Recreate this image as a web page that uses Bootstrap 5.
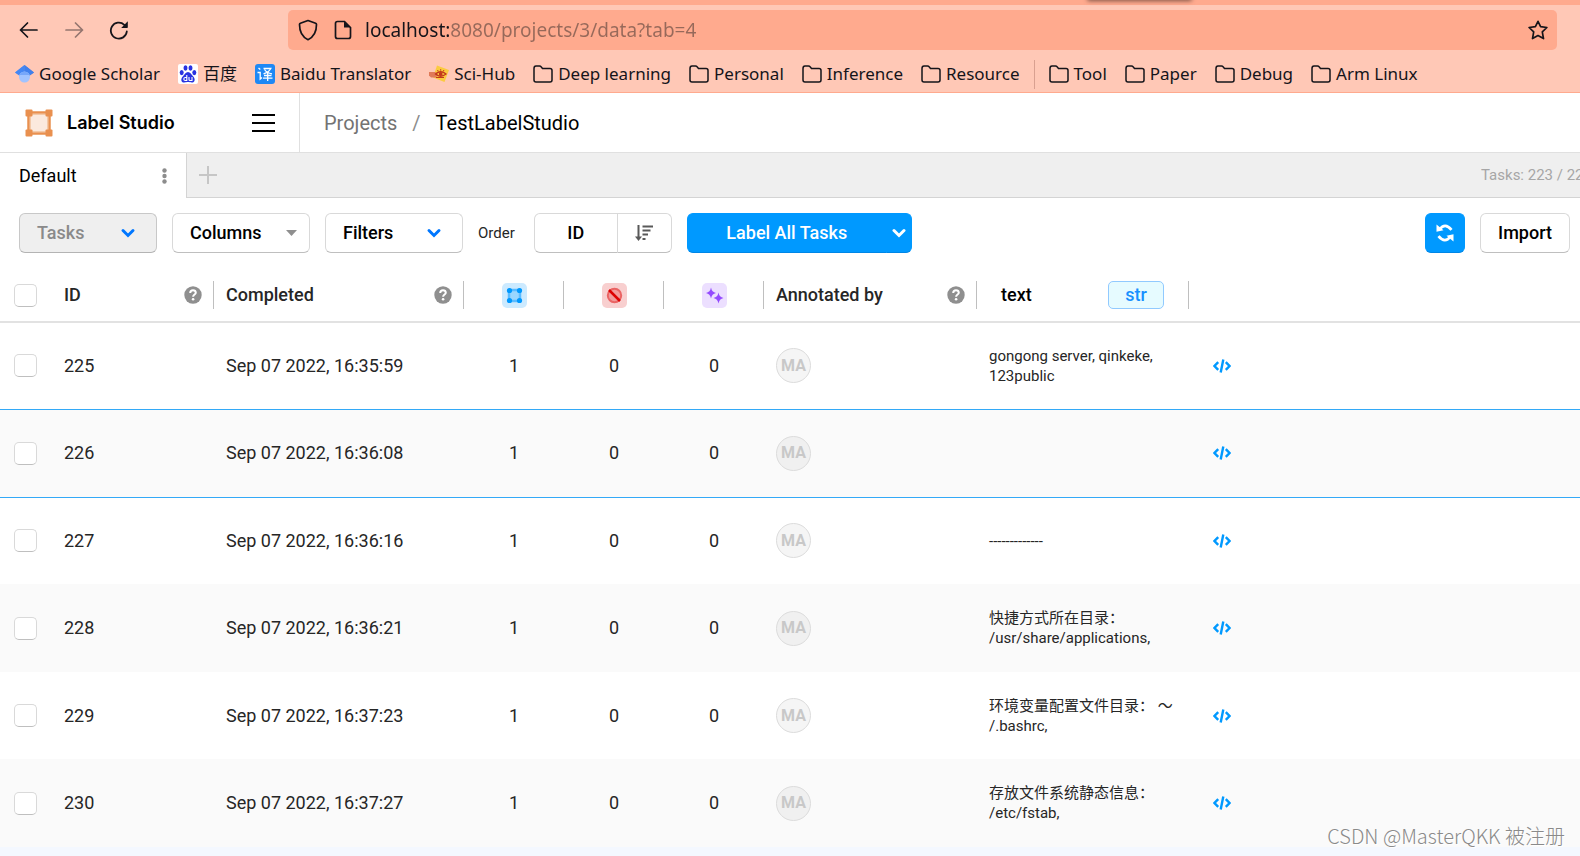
<!DOCTYPE html>
<html lang="en">
<head>
<meta charset="utf-8">
<meta name="viewport" content="width=device-width, initial-scale=1">
<title>Label Studio</title>
<link href="https://cdn.jsdelivr.net/npm/bootstrap@5.3.0/dist/css/bootstrap.min.css" rel="stylesheet">
<style>
  body { font-family: Roboto, "Noto Sans CJK SC", sans-serif; font-size: 18px; line-height: 24px; color: #262626; background: #f4f8ff; }
  svg { flex: none; }

  /* browser chrome */
  .chrome { background: #ffc8b6; border-top: 5px solid #ffaa8e; border-bottom: 1px solid #ffaa8e; font-family: "Noto Sans", "Noto Sans CJK SC", sans-serif; color: #15141a; }
  .tab-edge { top: -10px; right: 388px; width: 105px; height: 5px; border-radius: 4px; box-shadow: 0 1px 4px #00000080; }
  .navrow { padding: 5px 23px 5px 19px; }
  .navrow button { color: #15141a; width: 20px; height: 20px; }
  .navrow button:disabled { color: #15141a; opacity: .45; border: 0; }
  .navbtns { gap: 25px; width: 269px; }
  .urlbar { height: 40px; background: #ffaa8e; border-radius: 5px; padding: 0 9px 0 10px; }
  .urlbar input { border: 0; outline: 0; padding: 0; margin-left: 13px; font-size: 19px; color: transparent; -webkit-background-clip: text; background-clip: text; background-image: linear-gradient(90deg, #15141a 85px, #97695a 85px); }
  .marks { height: 37px; padding: 1px 15px 0; gap: 18px; font-size: 17px; white-space: nowrap; }
  .marks a { color: #15141a; text-decoration: none; gap: 5px; }
  .marks .rule { width: 1px; height: 29px; background: #d9a090; margin: 0 -4px; }

  /* app header */
  .apphead { height: 60px; background: #fff; border-bottom: 1px solid #e0e0e0; }
  .brand { width: 300px; padding: 0 24px 0 25px; border-right: 1px solid #e0e0e0; }
  .brand a { color: #000; text-decoration: none; font-family: Inter, sans-serif; font-weight: 600; gap: 14px; }
  .crumbs { font-size: 20px; padding-left: 24px; --bs-breadcrumb-item-padding-x: 15px; --bs-breadcrumb-divider-color: #8c8c8c; }
  .crumbs a { color: #737373; text-decoration: none; }
  .crumbs .active { color: #000; }

  /* view tabs */
  .views { height: 45px; background: #efefef; border-bottom: 1px solid #d4d4d4; }
  .views .current { width: 187px; background: #fff; border-right: 1px solid #d4d4d4; margin-bottom: -1px; padding: 0 19px; color: #000; }
  .taskcount { width: 99px; font-size: 15px; color: #a6a6a6; white-space: nowrap; overflow: hidden; }

  /* toolbar */
  .tools { background: #fff; padding: 15px 10px 15px 19px; gap: 15px; }
  .tools .btn { height: 40px; font-size: 18px; font-weight: 500; line-height: 24px; padding: 0 17px; border-radius: 6px; border: 1px solid #d9d9d9; border-bottom-color: #bfbfbf; color: #000; background: #fff; }
  .tools .pick { width: 138px; }
  .tools .btn:disabled { background: #efefef; color: #8a8a8a; border-color: #c8c8c8; border-bottom-color: #b4b4b4; opacity: 1; }
  .tools .solid { background: #0099ff; color: #fff; border-color: #0099ff; border-bottom-color: #0086e6; }
  .tools .btn-group .btn:first-child { border-top-right-radius: 0; border-bottom-right-radius: 0; }
  .tools .btn-group .btn:last-child { border-top-left-radius: 0; border-bottom-left-radius: 0; }
  .order { font-size: 15px; }

  /* task table */
  .tasks { table-layout: fixed; background: #fff; width: 100%; }
  .tasks th { height: 54px; padding: 0; font-weight: 500; border-bottom: 2px solid #e2e2e2; vertical-align: top; }
  .tasks th > div { height: 28px; margin-top: 13px; padding: 0 11px 0 12px; border-right: 1px solid #bfbfbf; }
  .tasks th.bare > div { border: 0; }
  .tasks td { height: 87px; padding: 0 12px; }
  .tasks tbody tr:nth-child(even) td { height: 88px; background: #fafafa; }
  .tasks tbody tr.hovered td { border-top: 1px solid #33a9f7; border-bottom: 1px solid #33a9f7; }
  .tasks .form-check-input { width: 23px; height: 23px; margin: 0; border: 1px solid #d9d9d9; border-bottom-color: #bfbfbf; border-radius: 5px; background-color: #fff; display: block; }
  .tasks td.pickcell, .tasks th.pickcell > div { padding: 0 14px; }
  .tasks td.value { font-size: 15px; line-height: 20px; padding: 0 16px 0 12px; }
  .kind { width: 56px; height: 28px; border: 1px solid #91caff; border-radius: 5px; background: #e6fbff; color: #1890ff; }
  .avatar { width: 35px; height: 35px; border-radius: 50%; border: 1px solid #dcdcdc; background: #f5f5f5; color: #c8c8c8; font-size: 16px; font-weight: 700; }
  .hovered .avatar, tr:nth-child(even) .avatar { background: #f0f0f0; }
  .watermark { right: 15px; bottom: 8px; font-family: "Noto Sans CJK SC", sans-serif; font-size: 20px; font-weight: 300; color: #8a8a8a; text-shadow: 1px 1px 0 #fff; }
</style>
</head>
<body class="d-flex flex-column min-vh-100 position-relative">

<svg width="0" height="0" class="position-absolute" aria-hidden="true">
  <symbol id="folder" viewBox="0 0 20 18"><path d="M1 3.500Q1 1 3 1h3.500q1 0 1.600.8L9.500 3.500H17q2 0 2 2V15q0 2-2 2H3q-2 0-2-2z" fill="none" stroke="currentColor" stroke-width="1.500"/></symbol>
  <symbol id="help" viewBox="0 0 18 18"><circle cx="9" cy="9" r="8.700" fill="#8f8f8f"/><path d="M6.200 7q.1-2.700 2.800-2.700T11.800 6.800c0 1.800-2.700 1.700-2.700 3.900" fill="none" stroke="#fff" stroke-width="2"/><circle cx="9.100" cy="13.300" r="1.300" fill="#fff"/></symbol>
  <symbol id="code" viewBox="0 0 18 14"><path d="M5.200 3.200 1.500 7l3.700 3.800M12.800 3.200 16.500 7l-3.700 3.800M10.300.5 7.700 13.500" fill="none" stroke="#0099ff" stroke-width="2.400"/></symbol>
  <symbol id="chev" viewBox="0 0 14 10"><path d="m2 2.500 5 5 5-5" fill="none" stroke="currentColor" stroke-width="3" stroke-linecap="round"/></symbol>
</svg>

<header class="chrome position-relative">
  <div class="tab-edge position-absolute"></div>
  <div class="navrow d-flex align-items-center">
    <div class="navbtns d-flex flex-shrink-0">
      <button class="btn p-0 border-0 d-flex" aria-label="Back"><svg width="20" height="20" viewBox="0 0 20 20" fill="none" stroke="currentColor" stroke-width="1.700" stroke-linecap="round" stroke-linejoin="round"><path d="M18 10H1.500M8.500 3 1.500 10l7 7"/></svg></button>
      <button class="btn p-0 border-0 d-flex" aria-label="Forward" disabled><svg width="20" height="20" viewBox="0 0 20 20" fill="none" stroke="currentColor" stroke-width="1.700" stroke-linecap="round" stroke-linejoin="round"><path d="M2 10h16.500M11.500 3l7 7-7 7"/></svg></button>
      <button class="btn p-0 border-0 d-flex" aria-label="Reload"><svg width="20" height="20" viewBox="0 0 20 20"><path d="M17.800 11.500A8 8 0 1 1 15.300 4.800" fill="none" stroke="currentColor" stroke-width="1.800" stroke-linecap="round"/><path d="M18.800 1.300v5.900q0 .8-.8.800h-5.800z" fill="currentColor"/></svg></button>
    </div>
    <div class="urlbar d-flex align-items-center flex-grow-1">
      <svg width="20" height="22" viewBox="0 0 20 22" fill="none" stroke="#15141a" stroke-width="1.700"><path d="M10 1.500 17.600 4.300q.9.400.9 1.300C18.500 12.500 16 18 10 20.700 4 18 1.500 12.500 1.500 5.600q0-.9.900-1.300z" stroke-linejoin="round"/></svg>
      <svg class="ms-3" width="18" height="20" viewBox="0 0 18 20"><path d="M3.500 1.500h7l6 6v9q0 2-2 2h-11q-2 0-2-2v-13q0-2 2-2z" fill="none" stroke="#15141a" stroke-width="1.700"/><path d="M10 1.500v6h6.500z" fill="#15141a"/></svg>
      <input class="flex-grow-1" type="text" aria-label="Address" value="localhost:8080/projects/3/data?tab=4">
      <button class="btn p-0 border-0 d-flex" aria-label="Bookmark this page"><svg width="20" height="20" viewBox="0 0 20 20"><path d="m10 1.300 2.600 5.300 6.300.9-4.600 4.400 1.200 6.700L10 15.600l-5.500 3 1.200-6.700L1.100 7.500l6.300-.9z" fill="none" stroke="#15141a" stroke-width="1.700" stroke-linejoin="round"/></svg></button>
    </div>
  </div>
  <nav class="marks d-flex align-items-center" aria-label="Bookmarks">
    <a href="#" class="d-flex align-items-center"><svg width="19" height="20" viewBox="0 0 19 20"><path d="M9.500 1 0 8.500l5 3.500L9.500 8z" fill="#4d90f5"/><path d="M9.500 1 19 8.500 14 12 9.500 8z" fill="#3a6fd0"/><path d="M0 8.500 9.500 1 19 8.500l-4.800 3.200H4.800z" fill="#4285f4" opacity=".8"/><circle cx="9.500" cy="13" r="5.500" fill="#a0c3ff"/><path d="M4.500 11a5.500 5.500 0 0 1 10 0z" fill="#76a7fa"/></svg>Google Scholar</a>
    <a href="#" class="d-flex align-items-center"><svg width="20" height="20" viewBox="0 0 20 20"><rect width="20" height="20" rx="2" fill="#fff"/><g fill="#2932e1"><ellipse cx="3.700" cy="8.600" rx="2" ry="2.600"/><ellipse cx="7.500" cy="4" rx="2" ry="2.700"/><ellipse cx="12.500" cy="4" rx="2" ry="2.700"/><ellipse cx="16.300" cy="8.600" rx="2" ry="2.600"/><path d="M10 8c2.200 0 3 2.300 4.800 3.900 3 2.700 2.200 6.600-1 6.600-1.500 0-2.300-.4-3.800-.4s-2.300.4-3.800.4c-3.200 0-4-3.900-1-6.600C7 10.300 7.800 8 10 8z"/></g><path d="M8.800 11v5.500H7.300a1.500 1.500 0 0 1 0-3h1.500M11 13v2.500q0 1 1 1h2V13" fill="none" stroke="#fff" stroke-width="1.100"/></svg>百度</a>
    <a href="#" class="d-flex align-items-center"><svg width="20" height="20" viewBox="0 0 20 20"><rect width="20" height="20" rx="3" fill="#1e88f5"/><path d="m3.500 4 1.800 1.600M2.500 8.500h2.700v6.500l1.800-1.500M8.500 4.500h7.300c-1.300 2.500-3.800 4.300-7.300 5.300M9.500 5.500c1.500 2.200 3.600 3.600 7.500 4.300M12.700 9v8M9 11.500h7.500M8 14.200h9.500" fill="none" stroke="#fff" stroke-width="1.300"/></svg>Baidu Translator</a>
    <a href="#" class="d-flex align-items-center"><svg width="20" height="20" viewBox="0 0 20 20"><path d="M8 1.500 20 6l-4.500 12L4 13.500z" fill="#fbcb3f"/><path d="M0 8h6l3 2-2 3.500H2L0 11.500z" fill="#e07a58"/><path d="M6.500 10q5-4.500 10.500 0-5.500 4.500-10.500 0z" fill="none" stroke="#c3371c" stroke-width="1.300"/><circle cx="11.700" cy="10" r="1.900" fill="#c3371c"/><path d="m8.500 6 .7 1.200M11.700 5.200v1.500M15 6l-.7 1.200M7 13.500h8" stroke="#c3371c"/></svg>Sci-Hub</a>
    <a href="#" class="d-flex align-items-center"><svg width="20" height="18"><use href="#folder"/></svg>Deep learning</a>
    <a href="#" class="d-flex align-items-center"><svg width="20" height="18"><use href="#folder"/></svg>Personal</a>
    <a href="#" class="d-flex align-items-center"><svg width="20" height="18"><use href="#folder"/></svg>Inference</a>
    <a href="#" class="d-flex align-items-center"><svg width="20" height="18"><use href="#folder"/></svg>Resource</a>
    <span class="rule"></span>
    <a href="#" class="d-flex align-items-center"><svg width="20" height="18"><use href="#folder"/></svg>Tool</a>
    <a href="#" class="d-flex align-items-center"><svg width="20" height="18"><use href="#folder"/></svg>Paper</a>
    <a href="#" class="d-flex align-items-center"><svg width="20" height="18"><use href="#folder"/></svg>Debug</a>
    <a href="#" class="d-flex align-items-center"><svg width="20" height="18"><use href="#folder"/></svg>Arm Linux</a>
  </nav>
</header>

<div class="apphead d-flex">
  <div class="brand d-flex align-items-center justify-content-between">
    <a href="#" class="d-flex align-items-center"><svg width="28" height="28" viewBox="0 0 28 28"><path d="M4 4h20v20H4z" fill="#fbe9dd"/><path d="M4 4h20v20H4z" fill="none" stroke="#f3c9a8" stroke-width="4"/><path d="M4 3.500h20M4 24.500h20M3.500 4v20M24.500 4v20" stroke="#e9904f" stroke-width="2"/><g fill="#e9904f"><rect x=".5" y=".5" width="7" height="7" rx="1"/><rect x="20.500" y=".5" width="7" height="7" rx="1"/><rect x=".5" y="20.500" width="7" height="7" rx="1"/><rect x="20.500" y="20.500" width="7" height="7" rx="1"/></g></svg>Label Studio</a>
    <button class="btn p-0 border-0 d-flex" aria-label="Menu"><svg width="23" height="18" viewBox="0 0 23 18"><path d="M0 1h23M0 9h23M0 17h23" stroke="#000" stroke-width="2"/></svg></button>
  </div>
  <nav class="d-flex align-items-center" aria-label="Breadcrumb">
    <ol class="breadcrumb crumbs mb-0">
      <li class="breadcrumb-item"><a href="#">Projects</a></li>
      <li class="breadcrumb-item active" aria-current="page">TestLabelStudio</li>
    </ol>
  </nav>
</div>

<div class="views d-flex">
  <div class="current d-flex align-items-center justify-content-between">Default
    <button class="btn p-0 border-0 d-flex" aria-label="Tab options"><svg width="5" height="16" viewBox="0 0 5 16" fill="#8c8c8c"><circle cx="2.500" cy="2.500" r="2.200"/><circle cx="2.500" cy="8" r="2.200"/><circle cx="2.500" cy="13.500" r="2.200"/></svg></button>
  </div>
  <button class="btn border-0 d-flex align-items-center" aria-label="Add tab"><svg width="18" height="18" viewBox="0 0 18 18"><path d="M9 0v18M0 9h18" stroke="#c6c6c6" stroke-width="2"/></svg></button>
  <div class="taskcount ms-auto align-self-center">Tasks: 223 / 22</div>
</div>

<div class="tools d-flex align-items-center">
  <button class="btn pick d-flex align-items-center" disabled>Tasks<svg class="ms-auto" width="22" height="10" style="color:#0077ff"><use href="#chev"/></svg></button>
  <button class="btn pick d-flex align-items-center pe-2">Columns<svg class="ms-auto me-1" width="11" height="6" viewBox="0 0 11 6"><path d="M0 0h11L5.500 6z" fill="#8f8f8f"/></svg></button>
  <button class="btn pick d-flex align-items-center">Filters<svg class="ms-auto" width="22" height="10" style="color:#0077ff"><use href="#chev"/></svg></button>
  <span class="order">Order</span>
  <div class="btn-group ms-1">
    <button class="btn px-0" style="width:84px">ID</button>
    <button class="btn px-0 d-flex align-items-center justify-content-center" style="width:55px" aria-label="Sort descending"><svg width="18" height="16" viewBox="0 0 18 16" fill="none" stroke="#595959" stroke-width="2"><path d="M3.500 0v13M7.500 1.500h10.500M7.500 5.500h8M7.500 9.500h5.500M7.500 14h3"/><path d="M0 11.500h7L3.500 16z" fill="#595959" stroke="none"/></svg></button>
  </div>
  <div class="btn-group">
    <button class="btn solid px-0" style="width:200px">Label All Tasks</button>
    <button class="btn solid px-0 d-flex align-items-center justify-content-center" style="width:26px" aria-label="More labeling options"><svg width="14" height="10"><use href="#chev"/></svg></button>
  </div>
  <button class="btn solid px-0 ms-auto d-flex align-items-center justify-content-center" style="width:40px" aria-label="Refresh"><svg width="18" height="20" viewBox="0 0 18 20" fill="none" stroke="#fff" stroke-width="2.800"><path d="M3.500 6.500Q9-1 15.500 6.800M14.500 13.500Q9 21 2.500 13.200"/><path d="M.5 1.500v7.300l7-1.600zM17.500 18.500v-7.300l-7 1.600z" fill="#fff" stroke="none"/></svg></button>
  <button class="btn">Import</button>
</div>

<table class="tasks">
  <colgroup><col style="width:52px"><col style="width:162px"><col style="width:250px"><col style="width:100px"><col style="width:100px"><col style="width:100px"><col style="width:213px"><col style="width:212px"><col></colgroup>
  <thead>
    <tr>
      <th class="pickcell bare"><div class="d-flex align-items-center"><input class="form-check-input" type="checkbox" aria-label="Select all tasks"></div></th>
      <th><div class="d-flex align-items-center justify-content-between">ID<svg width="18" height="18"><use href="#help"/></svg></div></th>
      <th><div class="d-flex align-items-center justify-content-between">Completed<svg width="18" height="18"><use href="#help"/></svg></div></th>
      <th aria-label="Total annotations"><div class="d-flex align-items-center justify-content-center"><svg width="25" height="25" viewBox="0 0 25 25"><rect width="25" height="25" rx="5" fill="#cceaff"/><path d="M7 7h11v11H7z" fill="#99d6ff" stroke="#5cbcff" stroke-width="2.500"/><g fill="#0099ff"><circle cx="7.500" cy="7.500" r="2.600"/><circle cx="17.500" cy="7.500" r="2.600"/><circle cx="7.500" cy="17.500" r="2.600"/><circle cx="17.500" cy="17.500" r="2.600"/></g></svg></div></th>
      <th aria-label="Cancelled annotations"><div class="d-flex align-items-center justify-content-center"><svg width="25" height="25" viewBox="0 0 25 25"><rect width="25" height="25" rx="5" fill="#f8cfcf"/><circle cx="12.500" cy="12.500" r="6.700" fill="#f19a9a" stroke="#ea6464" stroke-width="2"/><path d="m7 7 11 11" stroke="#dd0000" stroke-width="2.500"/></svg></div></th>
      <th aria-label="Total predictions"><div class="d-flex align-items-center justify-content-center"><svg width="25" height="25" viewBox="0 0 25 25"><rect width="25" height="25" rx="5" fill="#ecdfff"/><path d="M9 4.500q.8 4.700 5 5.500-4.200.8-5 5.500-.8-4.700-5-5.500 4.200-.8 5-5.500zM16.500 9.500q.8 4.700 5 5.500-4.200.8-5 5.500-.8-4.700-5-5.500 4.200-.8 5-5.500z" fill="#944bff"/></svg></div></th>
      <th><div class="d-flex align-items-center justify-content-between">Annotated by<svg width="18" height="18"><use href="#help"/></svg></div></th>
      <th class="text-black"><div class="d-flex align-items-center justify-content-between px-4">text<span class="kind d-flex align-items-center justify-content-center">str</span></div></th>
      <th class="bare" aria-label="Source"></th>
    </tr>
  </thead>
  <tbody>
    <tr><td class="pickcell"><input class="form-check-input" type="checkbox" aria-label="Select task 225"></td><td>225</td><td>Sep 07 2022, 16:35:59</td><td class="text-center">1</td><td class="text-center">0</td><td class="text-center">0</td><td><span class="avatar d-flex align-items-center justify-content-center">MA</span></td><td class="value">gongong server, qinkeke, 123public</td><td class="ps-4"><button class="btn p-0 border-0 d-flex" aria-label="Show source"><svg width="18" height="14"><use href="#code"/></svg></button></td></tr>
    <tr class="hovered"><td class="pickcell"><input class="form-check-input" type="checkbox" aria-label="Select task 226"></td><td>226</td><td>Sep 07 2022, 16:36:08</td><td class="text-center">1</td><td class="text-center">0</td><td class="text-center">0</td><td><span class="avatar d-flex align-items-center justify-content-center">MA</span></td><td class="value"></td><td class="ps-4"><button class="btn p-0 border-0 d-flex" aria-label="Show source"><svg width="18" height="14"><use href="#code"/></svg></button></td></tr>
    <tr><td class="pickcell"><input class="form-check-input" type="checkbox" aria-label="Select task 227"></td><td>227</td><td>Sep 07 2022, 16:36:16</td><td class="text-center">1</td><td class="text-center">0</td><td class="text-center">0</td><td><span class="avatar d-flex align-items-center justify-content-center">MA</span></td><td class="value">-------------</td><td class="ps-4"><button class="btn p-0 border-0 d-flex" aria-label="Show source"><svg width="18" height="14"><use href="#code"/></svg></button></td></tr>
    <tr><td class="pickcell"><input class="form-check-input" type="checkbox" aria-label="Select task 228"></td><td>228</td><td>Sep 07 2022, 16:36:21</td><td class="text-center">1</td><td class="text-center">0</td><td class="text-center">0</td><td><span class="avatar d-flex align-items-center justify-content-center">MA</span></td><td class="value" lang="zh-CN">快捷方式所在目录： /usr/share/applications,</td><td class="ps-4"><button class="btn p-0 border-0 d-flex" aria-label="Show source"><svg width="18" height="14"><use href="#code"/></svg></button></td></tr>
    <tr><td class="pickcell"><input class="form-check-input" type="checkbox" aria-label="Select task 229"></td><td>229</td><td>Sep 07 2022, 16:37:23</td><td class="text-center">1</td><td class="text-center">0</td><td class="text-center">0</td><td><span class="avatar d-flex align-items-center justify-content-center">MA</span></td><td class="value" lang="zh-CN">环境变量配置文件目录： ～<br>/.bashrc,</td><td class="ps-4"><button class="btn p-0 border-0 d-flex" aria-label="Show source"><svg width="18" height="14"><use href="#code"/></svg></button></td></tr>
    <tr><td class="pickcell"><input class="form-check-input" type="checkbox" aria-label="Select task 230"></td><td>230</td><td>Sep 07 2022, 16:37:27</td><td class="text-center">1</td><td class="text-center">0</td><td class="text-center">0</td><td><span class="avatar d-flex align-items-center justify-content-center">MA</span></td><td class="value" lang="zh-CN">存放文件系统静态信息：<br>/etc/fstab,</td><td class="ps-4"><button class="btn p-0 border-0 d-flex" aria-label="Show source"><svg width="18" height="14"><use href="#code"/></svg></button></td></tr>
  </tbody>
</table>

<div class="watermark position-absolute" lang="zh-CN">CSDN @MasterQKK 被注册</div>

<script src="https://cdn.jsdelivr.net/npm/bootstrap@5.3.0/dist/js/bootstrap.bundle.min.js"></script>
</body>
</html>
